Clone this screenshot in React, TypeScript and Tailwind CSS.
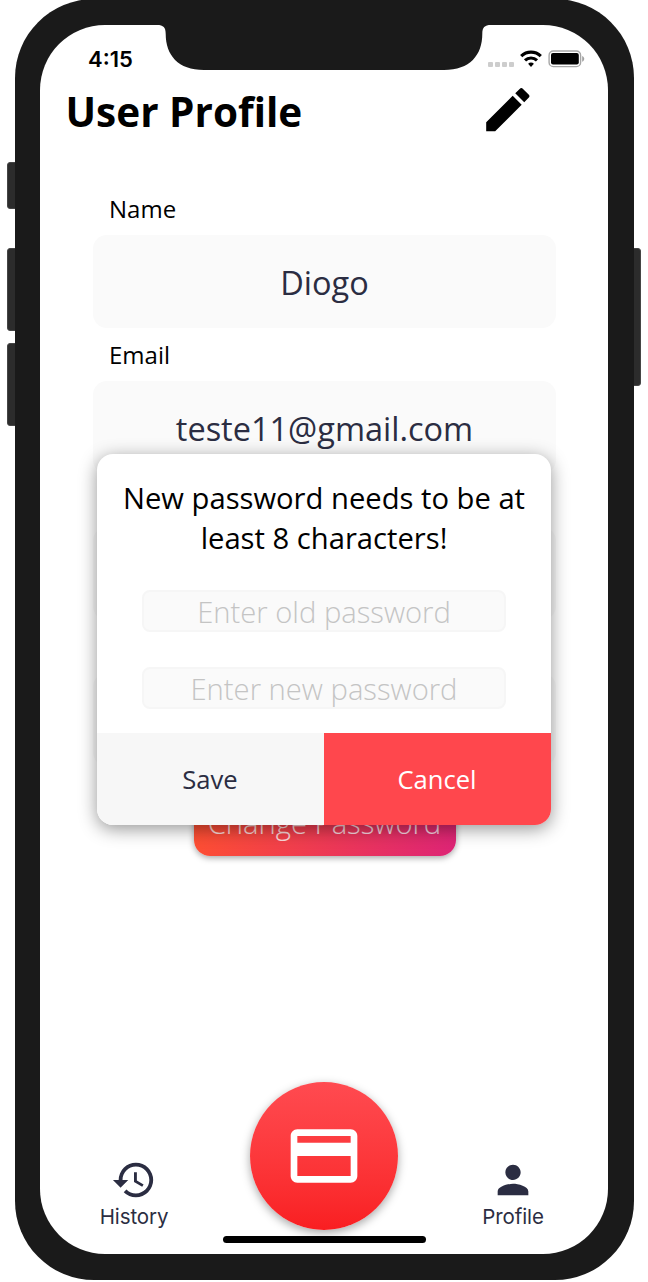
import type { ReactNode } from "react";
import { MdCreditCard, MdEdit, MdHistory, MdPerson } from "react-icons/md";

function Notch() {
  return (
    <svg className="absolute left-[114px] top-[-1px]" width="340" height="46" viewBox="0 0 340 46" fill="#1a1a1a">
      <path d="M0 0H340V1H337C330.500 1 328.300 3.500 328.300 10C328.300 31 316 46 290 46H50C24 46 11.700 31 11.700 10C11.700 3.500 9.500 1 3 1H0Z" />
    </svg>
  );
}

function StatusBar() {
  return (
    <div className="flex h-[45px] items-start justify-between pl-[48px] pr-[23px] pt-[24px]">
      <span className="-mt-px font-['Inter',sans-serif] text-[22px] font-semibold leading-[22px] text-black">4:15</span>
      <div className="flex items-start">
        <div className="mt-[13px] flex gap-[2px]">
          <i className="h-[5px] w-[5px] rounded-[1px] bg-[#cdcdcd]" />
          <i className="h-[5px] w-[5px] rounded-[1px] bg-[#cdcdcd]" />
          <i className="h-[5px] w-[5px] rounded-[1px] bg-[#cdcdcd]" />
          <i className="h-[5px] w-[5px] rounded-[1px] bg-[#cdcdcd]" />
        </div>
        <svg className="ml-[6px] mt-px" width="22" height="17" viewBox="0 0 22 17" fill="none" stroke="#000" strokeWidth="3.200">
          <path d="M1.200 6.100C6.800 .9 15.200 .9 20.800 6.100" />
          <path d="M5 10.400C8.400 7.200 13.600 7.200 17 10.400" />
          <path d="M11 16.900L8.100 13.800C9.700 12.200 12.300 12.200 13.900 13.800Z" fill="#000" stroke="none" />
        </svg>
        <svg className="ml-[6px] mt-[1px]" width="37" height="18" viewBox="0 0 37 18">
          <rect x="1.100" y="1" width="31.500" height="15.600" rx="4.200" fill="none" stroke="#a6a6a6" strokeWidth="1.400" />
          <rect x="3" y="3" width="27.800" height="11.600" rx="2" fill="#000" />
          <path d="M34.200 6C36.900 7 36.900 10.700 34.200 11.700Z" fill="#a0a0a0" />
        </svg>
      </div>
    </div>
  );
}

function Field({ label, value }: { label: string; value: string }) {
  return (
    <div className="flex h-[146px] flex-col">
      <label className="h-[53px] pl-[16px] pt-[10px] text-[24px] leading-[34px] text-black">{label}</label>
      <div className="flex h-[93px] items-center justify-center rounded-[14px] bg-[#fafafa] pt-[4px] text-[32.500px] text-[#2b2d42]">
        {value}
      </div>
    </div>
  );
}

function Tab({ icon, label }: { icon: ReactNode; label: string }) {
  return (
    <div className="flex w-[80px] flex-col items-center text-[#2b2d42]">
      {icon}
      <span className="mt-px font-['Inter',sans-serif] text-[20.500px] leading-[26px] tracking-[-0.1px]">{label}</span>
    </div>
  );
}

function PasswordDialog() {
  return (
    <div
      role="dialog"
      className="absolute left-[57px] top-[429px] flex h-[371px] w-[454px] flex-col overflow-hidden rounded-[16px] bg-white shadow-[0_4px_18px_rgba(0,0,0,0.42)]"
    >
      <p className="h-[136px] pt-[24px] text-center text-[29.200px] leading-[40px] text-black">
        New password needs to be at
        <br />
        least 8 characters!
      </p>
      <div className="flex flex-1 flex-col items-center gap-[35px]">
        <input
          className="h-[42px] w-[364px] rounded-[8px] border-2 border-[#f6f6f6] bg-[#fafafa] pt-[3px] text-center text-[29.200px] font-light placeholder:text-[#c4c4c4]"
          placeholder="Enter old password"
        />
        <input
          className="h-[42px] w-[364px] rounded-[8px] border-2 border-[#f6f6f6] bg-[#fafafa] pt-[3px] text-center text-[29.200px] font-light placeholder:text-[#c4c4c4]"
          placeholder="Enter new password"
        />
      </div>
      <div className="flex h-[92px] text-[25.600px]">
        <button className="flex-1 bg-[#f7f7f7] pr-px pt-[2px] text-[#2b2d42]">Save</button>
        <button className="flex-1 bg-[#ff474d] pr-px pt-[2px] text-white">Cancel</button>
      </div>
    </div>
  );
}

export default function App() {
  return (
    <div className="relative h-[1282px] w-[648px] overflow-hidden bg-white font-['Open_Sans','Noto_Sans',sans-serif]">
      <i className="absolute left-[6.500px] top-[162px] h-[47px] w-[12px] rounded-[3px] border border-[#454545] bg-[#2c2c2c]" />
      <i className="absolute left-[6.500px] top-[248px] h-[83px] w-[12px] rounded-[3px] border border-[#454545] bg-[#2c2c2c]" />
      <i className="absolute left-[6.500px] top-[343px] h-[83px] w-[12px] rounded-[3px] border border-[#454545] bg-[#2c2c2c]" />
      <i className="absolute left-[629px] top-[248px] h-[138px] w-[12px] rounded-[3px] border border-[#454545] bg-[#2c2c2c]" />

      <div className="relative -mt-px ml-[14.500px] h-[1281.400px] w-[619px] rounded-[79px] bg-[#1a1a1a] px-[25.500px] pt-[26px]">
        <div className="relative flex h-[1229px] w-[568px] flex-col overflow-hidden rounded-[65px] bg-white">
          <Notch />
          <StatusBar />
          <header className="flex h-[112px] items-start justify-between pl-[25.500px] pr-[72px]">
            <h1 className="mt-[15px] text-[40.500px] font-bold leading-[54px] text-black">User Profile</h1>
            <MdEdit className="mt-[11px] h-[57.500px] w-[57.500px] text-black" />
          </header>
          <main className="ml-[53px] mr-[52px] flex flex-col">
            <Field label="Name" value="Diogo" />
            <Field label="Email" value="teste11@gmail.com" />
            <Field label="" value="" />
            <Field label="" value="" />
            <button className="mt-[18px] h-[72px] w-[262px] self-center rounded-[16px] bg-[linear-gradient(105deg,#ff512f,#dd2476)] pt-[7px] text-[29.200px] font-light text-white/80 shadow-[0_2px_6px_rgba(0,0,0,0.35)]">
              Change Password
            </button>
          </main>

          <nav className="mt-auto flex h-[172.500px] items-start justify-between pl-[54px] pr-[55px]">
            <div className="mt-[75.500px]">
              <Tab icon={<MdHistory className="h-[46px] w-[46px]" />} label="History" />
            </div>
            <button className="flex h-[148px] w-[148px] items-center justify-center rounded-full bg-linear-to-b from-[#ff4a50] to-[#f91e21] text-white shadow-[0_3px_10px_rgba(0,0,0,0.35)]">
              <MdCreditCard className="h-[80px] w-[80px]" />
            </button>
            <div className="mt-[75.500px]">
              <Tab icon={<MdPerson className="h-[46px] w-[46px]" />} label="Profile" />
            </div>
          </nav>
          <i className="absolute bottom-[11px] left-[182.500px] h-[7px] w-[203px] rounded-full bg-black" />
          <PasswordDialog />
        </div>
      </div>
    </div>
  );
}
